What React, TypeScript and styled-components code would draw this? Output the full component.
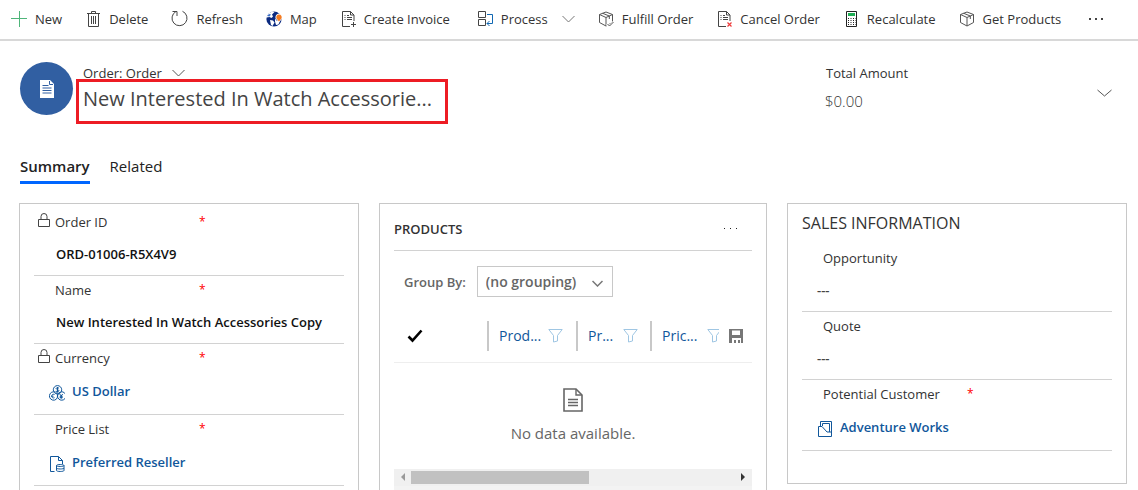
import React, { useState } from 'react';
import styled, { createGlobalStyle, css } from 'styled-components';

const GlobalStyle = createGlobalStyle`
  *, *::before, *::after { box-sizing: border-box; }
  body {
    margin: 0;
    background: #fff;
    color: #333;
    font-family: 'Segoe UI', 'Open Sans', 'Noto Sans', sans-serif;
    font-size: 13px;
    line-height: 20px;
  }
  button, select { font: inherit; color: inherit; }
`;

/* ---------- layout ---------- */

const Shell = styled.div`
  display: flex;
  flex-direction: column;
  height: 100vh;
  overflow: hidden;
`;

const CommandBar = styled.nav`
  display: flex;
  flex: none;
  align-items: center;
  gap: 27px;
  height: 41px;
  padding: 0 11px 2px;
  border-bottom: 2px solid #d8d8d8;
  white-space: nowrap;
`;

const CommandGroup = styled.div`
  display: flex;
  align-items: center;
  gap: 23px;
`;

const PlainButton = styled.button`
  display: flex;
  align-items: center;
  padding: 0;
  border: 0;
  background: none;
  cursor: pointer;
`;

const Command = styled(PlainButton)`
  gap: 8px;
`;

const ChevronSlot = styled.span`
  display: flex;
  margin-left: 6px;
`;

const Content = styled.main`
  flex: 1;
  min-height: 0;
  overflow-y: auto;
  scrollbar-width: none;
`;

const RecordHeader = styled.header`
  display: flex;
  align-items: flex-start;
  padding: 21px 26px 0 20px;
`;

const Avatar = styled.div`
  display: flex;
  flex: none;
  align-items: center;
  justify-content: center;
  width: 53px;
  height: 53px;
  border-radius: 50%;
  background: #315fa2;
`;

const Identity = styled.div`
  flex: none;
  width: 372px;
  margin-left: 3px;
  padding-top: 2px;
`;

const EntityPicker = styled(PlainButton)`
  gap: 10px;
  height: 18px;
  padding-left: 7px;
`;

const RecordTitle = styled.h1`
  height: 45px;
  margin: -3px 0 0;
  padding: 2px 0 0 4px;
  border: 3px solid #ed1c24;
  color: #444;
  font-size: 20px;
  font-weight: 400;
  line-height: 30px;
  white-space: nowrap;
`;

const Total = styled.dl`
  width: 272px;
  margin: 1px 0 0 auto;
`;

const TotalLabel = styled.dt`
  padding-left: 1px;
`;

const TotalValue = styled.dd`
  margin: 8px 0 0;
  font-size: 15px;
  font-weight: 300;
`;

const ExpandButton = styled(PlainButton)`
  height: 20px;
  margin-top: 21px;
`;

const TabList = styled.div`
  display: flex;
  gap: 20px;
  padding: 30px 20px 0;
`;

const Tab = styled(PlainButton)<{ $active: boolean }>`
  height: 30px;
  padding-bottom: 3px;
  border-bottom: 3px solid ${(p) => (p.$active ? '#0066ff' : 'transparent')};
  color: #222;
  font-size: 15px;
  font-weight: ${(p) => (p.$active ? 600 : 400)};
`;

const Columns = styled.div`
  display: grid;
  grid-template-columns: 340fr 388fr 340fr;
  align-items: start;
  gap: 20px;
  padding: 19px 11px 20px 19px;
`;

const Card = styled.section<{ $top?: number; $bottom?: number }>`
  min-width: 0;
  padding: ${(p) => p.$top ?? 0}px 14px ${(p) => p.$bottom ?? 20}px;
  border: 1px solid #c8c8c8;
`;

/* ---------- fields ---------- */

const FieldRow = styled.div`
  padding: 4px 0 11px;
  border-bottom: 1px solid #d2d2d2;
`;

const FieldHead = styled.div`
  display: grid;
  grid-template-columns: 21px 144px auto;
  height: 20px;
  margin-bottom: 12px;
`;

const LockSlot = styled.span`
  padding: 1px 0 0 4px;
  line-height: 0;
`;

const Required = styled.span`
  color: #f00;
  font-size: 12px;
  line-height: 20px;
`;

const FieldValue = styled.div<{ $strong?: boolean }>`
  height: 20px;
  padding-left: ${(p) => (p.$strong ? 22 : 15)}px;
  color: ${(p) => (p.$strong ? '#111' : '#444')};
  font-weight: 600;
`;

const Lookup = styled.a`
  display: flex;
  align-items: flex-start;
  gap: 7px;
  height: 23px;
  padding-left: 15px;
  color: #11579b;
  font-weight: 600;
  line-height: 22px;
  text-decoration: none;

  svg { margin-top: 5px; }
`;

const SectionTitle = styled.h2`
  height: 40px;
  margin: 0;
  font-size: 16px;
  font-weight: 400;
  line-height: 38px;
`;

/* ---------- products grid ---------- */

const GridHead = styled.div`
  display: flex;
  align-items: center;
  justify-content: space-between;
  height: 47px;
  padding: 4px 14px 0 0;
  border-bottom: 1px solid #d2d2d2;
`;

const GridTitle = styled.h2`
  margin: 0;
  font-size: 13px;
  font-weight: 600;
`;

const GroupBar = styled.div`
  display: flex;
  align-items: center;
  gap: 11px;
  padding: 15px 10px 13px;
  color: #666;
  font-weight: 600;
`;

const SelectFrame = styled.div`
  display: grid;
  align-items: center;
  width: 136px;
  height: 31px;
  border: 1px solid #c8c8c8;

  > * { grid-area: 1 / 1; }
  > svg { justify-self: end; margin: 4px 9px 0 0; pointer-events: none; }
`;

const GroupSelect = styled.select`
  width: 100%;
  height: 100%;
  padding: 0 24px 0 8px;
  border: 0;
  background: none;
  appearance: none;
  font-size: 14px;
  font-weight: 600;
`;

const ProductTable = styled.table`
  width: 100%;
  border-collapse: collapse;
  table-layout: fixed;
`;

const HeadCell = styled.th<{ $width?: number }>`
  width: ${(p) => (p.$width ? `${p.$width}px` : 'auto')};
  height: 52px;
  padding: 0;
  border-bottom: 1px solid #eee;
  font-weight: 400;
  text-align: left;
`;

const divided = css`
  padding-left: 10px;
  border-left: 2px solid #c8c8c8;
`;

const HeadInner = styled.div<{ $divided?: boolean; $gap?: number }>`
  display: flex;
  align-items: center;
  gap: ${(p) => p.$gap ?? 7}px;
  height: 30px;
  padding-left: 13px;
  color: #11579b;
  font-size: 14px;
  ${(p) => p.$divided && divided}
`;

const EmptyCell = styled.td`
  padding: 25px 0 26px;
  color: #666;
  font-size: 15px;
  text-align: center;

  svg { display: block; margin: 0 auto 11px; }
`;

const ScrollTrack = styled.div`
  display: grid;
  grid-template-columns: 17px 1fr 17px;
  align-items: center;
  justify-items: center;
  height: 17px;
  background: #f0f0f0;
`;

const ScrollThumb = styled.div`
  justify-self: start;
  width: 55%;
  height: 13px;
  background: #c1c1c1;
`;

const GridFooter = styled.div`
  height: 32px;
  background: #f3f3f3;
`;

/* ---------- icons ---------- */

type IconProps = { size?: number; color?: string; children: React.ReactNode; height?: number };

const Icon = ({ size = 16, height, color = '#444', children }: IconProps) => (
  <svg
    width={size}
    height={height ?? size}
    viewBox={`0 0 ${size} ${height ?? size}`}
    fill="none"
    stroke={color}
    aria-hidden="true"
  >
    {children}
  </svg>
);

const PlusIcon = () => (
  <Icon color="#4fb57a"><path d="M8.500 0v16M0 7.500h16" /></Icon>
);

const TrashIcon = () => (
  <Icon><path d="M2 2.500h13M6.500 2.500v-2h4v2M3.500 2.500v13h10v-13M6.500 5v8M8.500 5v8M10.500 5v8" /></Icon>
);

const RefreshIcon = () => (
  <Icon size={17} height={17}><path d="M11.500 1.300a7.500 7.500 0 1 1-6.600.3M1.500 1.500h4.500v4.500" /></Icon>
);

const GlobeIcon = () => (
  <Icon>
    <g stroke="none">
      <circle cx="8" cy="8" r="7.600" fill="#0b2a80" />
      <path d="M.5 6.500l3-.5 2 1 1.500-1.500L6 3.500 8.500 1 6.500.5C3 1.500 1 3.500.5 6.500zM4 9l3 .5 1.500 2L6.500 15 5 14zM9 7.500l2 2.500 3-.5-1.500 4-2.500.5-1-3.500z" fill="#fff" />
      <path d="M1 5l2-2 2 .5L3.500 5.500z" fill="#3c6fc4" />
      <path d="M13 2.600a3.700 3.700 0 0 1 3 5.200L13 11.600 9.800 7.800A3.700 3.700 0 0 1 13 2.600z" fill="#fff" />
      <path d="M13 3.500a2.800 2.800 0 0 1 2.400 4L13 10.500 10.600 7.500A2.800 2.800 0 0 1 13 3.500z" fill="#f47b20" />
    </g>
  </Icon>
);

const DocBody = () => (
  <path d="M10 15.500H2.500V.5h8l3.500 3.500V10M10.500.5v3.500H14M4.500 4.500h1M7 4.500h2M4.500 6.500h1M7 6.500h5M4.500 8.500h1M7 8.500h5" />
);

const InvoiceIcon = () => (
  <Icon><DocBody /><path d="M13.500 11v5M11 13.500h5" /></Icon>
);

const CancelIcon = () => (
  <Icon><DocBody /><path d="M11.500 11.500l4 4M15.500 11.500l-4 4" stroke="#ee3b3b" strokeWidth="1.200" /></Icon>
);

const ProcessIcon = () => (
  <Icon>
    <path d="M1.500.5h7v6h-7zM1.500 8.500h7v6h-7z" />
    <path d="M10 3.500h5.500v9H10M12.500 10L10 12.500l2.500 2.500" stroke="#1168b3" />
  </Icon>
);

const BoxIcon = ({ checked }: { checked?: boolean }) => (
  <Icon color="#555">
    <path d="M8 1l6.500 2.500v8L8 15l-6.500-3.500v-8zM1.500 3.500L8 6.500l6.500-3M8 6.500V15M4.700 2.300L11.300 5v3" />
    {checked && (
      <>
        <path d="M9 13l2.500 2.500L16 11" stroke="#fff" strokeWidth="3" />
        <path d="M9.500 13l2 2 4-4" />
      </>
    )}
  </Icon>
);

const CalculatorIcon = () => (
  <Icon color="#222">
    <path d="M3.500.5h10v15h-10z" />
    <path d="M5 3.500h7" stroke="#1eae54" strokeWidth="3" />
    <path d="M5 7.500h8M5 9.500h8M5 11.500h8M5 13.500h8" strokeDasharray="1 1.500" />
  </Icon>
);

type ChevronProps = { width?: number; height?: number; color?: string; weight?: number };

const Chevron = ({ width = 13, height = 8, color = '#555', weight = 1 }: ChevronProps) => (
  <Icon size={width} height={height} color={color}>
    <path d={`M.5 1L${width / 2} ${height - 1}L${width - 0.5} 1`} strokeWidth={weight} />
  </Icon>
);

const MoreIcon = ({ wide }: { wide?: boolean }) => (
  <Icon size={16} height={4} color={wide ? '#444' : '#222'}>
    <path
      d={wide ? 'M1 2h2M7 2h2M13 2h2' : 'M2 1.500h1M8 1.500h1M14 1.500h1'}
      strokeWidth={wide ? 2 : 1}
    />
  </Icon>
);

const RecordIcon = () => (
  <Icon size={14} height={18} color="none">
    <path d="M0 0h10l4 4v14H0z" fill="#fff" />
    <path d="M2.500 5.500h6M2.500 8h9M2.500 10.500h9M2.500 13h9" stroke="#315fa2" />
    <path d="M9.500 1v3.500H13" stroke="#315fa2" />
  </Icon>
);

const LockIcon = () => (
  <Icon size={12} height={15}><path d="M.5 6.500h11v7H.5zM3 6.500V3.500a3 3 0 0 1 6 0v3" /></Icon>
);

const CurrencyIcon = () => (
  <Icon color="#11579b">
    <circle cx="8.500" cy="4.800" r="4.200" />
    <path d="M4.700 6.800a4.200 4.200 0 1 0 2.500 7.500M5 6.700a4 4 0 0 1 3.500 4.300M12.300 6.800a4.200 4.200 0 1 1-3.800 4.200 4.200 4.200 0 0 1 3.800-4.200M8.500 11a4.200 4.200 0 0 1-1.300 3.300" />
    <path d="M10 3.200c-1.500-.9-3-.4-2.800.5.2 1 2.700.8 2.700 2 0 1-1.700 1.200-3 .4M8.500 2v5.600M5.500 9.500c-2-.8-2.700.5-2.700 1.700s1 2.300 2.700 1.500M2 11.200h2.500M10.700 9l1.500 2 1.500-2M12.200 11v2.800M10.700 11.300h3M10.700 12.600h3" />
  </Icon>
);

const PriceListIcon = () => (
  <Icon color="#11579b">
    <path d="M5.500 15.500h-4V.5h8l4 4V8M9.500.5v4h4" />
    <path d="M7.500 9.500c0-1.300 7.500-1.300 7.500 0s-7.500 1.300-7.500 0v5c0 1.300 7.500 1.300 7.500 0v-5M7.500 12c0 1.300 7.500 1.300 7.500 0" />
  </Icon>
);

const AccountIcon = () => (
  <Icon color="#11579b">
    <path d="M1.500 5.500h3.500l5 5.500h4.500v4.500h-13z" />
    <path d="M3.500 5V.5h11v10.500M5.500 5V2.500h7v8.500" />
  </Icon>
);

const CheckIcon = () => (
  <Icon size={16} height={14} color="#000">
    <path d="M1.500 7.500l4 4L14.500 1.500" strokeWidth="2.600" />
  </Icon>
);

const FilterIcon = ({ width = 15 }: { width?: number }) => (
  <Icon size={width} height={14} color="#9fc6e3">
    <path d="M.8.5h13.400L9.500 6.500v5.500L5.500 13V6.500z" />
  </Icon>
);

const SaveIcon = () => (
  <Icon size={14} height={14} color="none">
    <path d="M0 0h14v14h-2V9H3v5H0zM3 1.500V6h8V1.500zM5 11h2v3H5zM9 11h2v3H9z" fill="#777" fillRule="evenodd" />
  </Icon>
);

const EmptyDocIcon = () => (
  <Icon size={20} height={24} color="#666">
    <path d="M1 1h12l6 6v16H1z" strokeWidth="1.600" />
    <path d="M13 1v6h6M5 11.500h10M5 14.500h10M5 17.500h10" strokeWidth="1.400" />
  </Icon>
);

const ArrowIcon = ({ right }: { right?: boolean }) => (
  <Icon size={5} height={8} color="none">
    <path d={right ? 'M0 0l4 4-4 4z' : 'M5 0L1 4l4 4z'} fill={right ? '#333' : '#999'} />
  </Icon>
);

/* ---------- parts ---------- */

const commandGroups = [
  [
    { label: 'New', icon: <PlusIcon /> },
    { label: 'Delete', icon: <TrashIcon /> },
    { label: 'Refresh', icon: <RefreshIcon /> },
    { label: 'Map', icon: <GlobeIcon /> },
    { label: 'Create Invoice', icon: <InvoiceIcon /> },
  ],
  [
    { label: 'Process', icon: <ProcessIcon />, menu: true },
    { label: 'Fulfill Order', icon: <BoxIcon checked /> },
    { label: 'Cancel Order', icon: <CancelIcon /> },
    { label: 'Recalculate', icon: <CalculatorIcon /> },
    { label: 'Get Products', icon: <BoxIcon /> },
  ],
] as { label: string; icon: React.ReactNode; menu?: boolean }[][];

type FieldProps = {
  label: string;
  required?: boolean;
  locked?: boolean;
  children: React.ReactNode;
};

const Field = ({ label, required, locked, children }: FieldProps) => (
  <FieldRow>
    <FieldHead>
      <LockSlot>{locked && <LockIcon />}</LockSlot>
      <span>{label}</span>
      {required && <Required>*</Required>}
    </FieldHead>
    {children}
  </FieldRow>
);

const tabs = ['Summary', 'Related'];

export default function App() {
  const [active, setActive] = useState('Summary');

  return (
    <Shell>
      <GlobalStyle />
      <CommandBar aria-label="Commands">
        {commandGroups.map((group) => (
          <CommandGroup key={group[0].label}>
            {group.map((c) => (
              <Command key={c.label} type="button">
                {c.icon}
                <span>{c.label}</span>
                {c.menu && <ChevronSlot><Chevron color="#777" /></ChevronSlot>}
              </Command>
            ))}
          </CommandGroup>
        ))}
        <PlainButton type="button" aria-label="More commands"><MoreIcon wide /></PlainButton>
      </CommandBar>

      <Content>
        <RecordHeader>
          <Avatar><RecordIcon /></Avatar>
          <Identity>
            <EntityPicker type="button">
              <span>Order: Order</span>
              <Chevron />
            </EntityPicker>
            <RecordTitle>New Interested In Watch Accessorie...</RecordTitle>
          </Identity>
          <Total>
            <TotalLabel>Total Amount</TotalLabel>
            <TotalValue>$0.00</TotalValue>
          </Total>
          <ExpandButton type="button" aria-label="Expand header"><Chevron width={15} /></ExpandButton>
        </RecordHeader>

        <TabList role="tablist">
          {tabs.map((t) => (
            <Tab
              key={t}
              type="button"
              role="tab"
              aria-selected={t === active}
              $active={t === active}
              onClick={() => setActive(t)}
            >
              {t}
            </Tab>
          ))}
        </TabList>

        <Columns>
          <Card $top={4}>
            <Field label="Order ID" required locked>
              <FieldValue $strong>ORD-01006-R5X4V9</FieldValue>
            </Field>
            <Field label="Name" required>
              <FieldValue $strong>New Interested In Watch Accessories Copy</FieldValue>
            </Field>
            <Field label="Currency" required locked>
              <Lookup href="#currency"><CurrencyIcon />US Dollar</Lookup>
            </Field>
            <Field label="Price List" required>
              <Lookup href="#price-list"><PriceListIcon />Preferred Reseller</Lookup>
            </Field>
          </Card>

          <Card>
            <GridHead>
              <GridTitle>PRODUCTS</GridTitle>
              <PlainButton type="button" aria-label="More product commands"><MoreIcon /></PlainButton>
            </GridHead>
            <GroupBar>
              <label htmlFor="group-by">Group By:</label>
              <SelectFrame>
                <GroupSelect id="group-by">
                  <option>(no grouping)</option>
                </GroupSelect>
                <Chevron width={11} height={7} color="#777" weight={1.5} />
              </SelectFrame>
            </GroupBar>
            <ProductTable>
              <thead>
                <tr>
                  <HeadCell $width={93}><HeadInner><CheckIcon /></HeadInner></HeadCell>
                  <HeadCell $width={89}><HeadInner $divided>Prod...<FilterIcon /></HeadInner></HeadCell>
                  <HeadCell $width={74}><HeadInner $divided $gap={10}>Pr...<FilterIcon /></HeadInner></HeadCell>
                  <HeadCell><HeadInner $divided $gap={10}>Pric...<FilterIcon width={12} /><SaveIcon /></HeadInner></HeadCell>
                </tr>
              </thead>
              <tbody>
                <tr>
                  <EmptyCell colSpan={4}><EmptyDocIcon />No data available.</EmptyCell>
                </tr>
              </tbody>
            </ProductTable>
            <ScrollTrack>
              <ArrowIcon />
              <ScrollThumb />
              <ArrowIcon right />
            </ScrollTrack>
            <GridFooter />
          </Card>

          <Card $bottom={32}>
            <SectionTitle>SALES INFORMATION</SectionTitle>
            <Field label="Opportunity"><FieldValue>---</FieldValue></Field>
            <Field label="Quote"><FieldValue>---</FieldValue></Field>
            <Field label="Potential Customer" required>
              <Lookup href="#customer"><AccountIcon />Adventure Works</Lookup>
            </Field>
          </Card>
        </Columns>
      </Content>
    </Shell>
  );
}
